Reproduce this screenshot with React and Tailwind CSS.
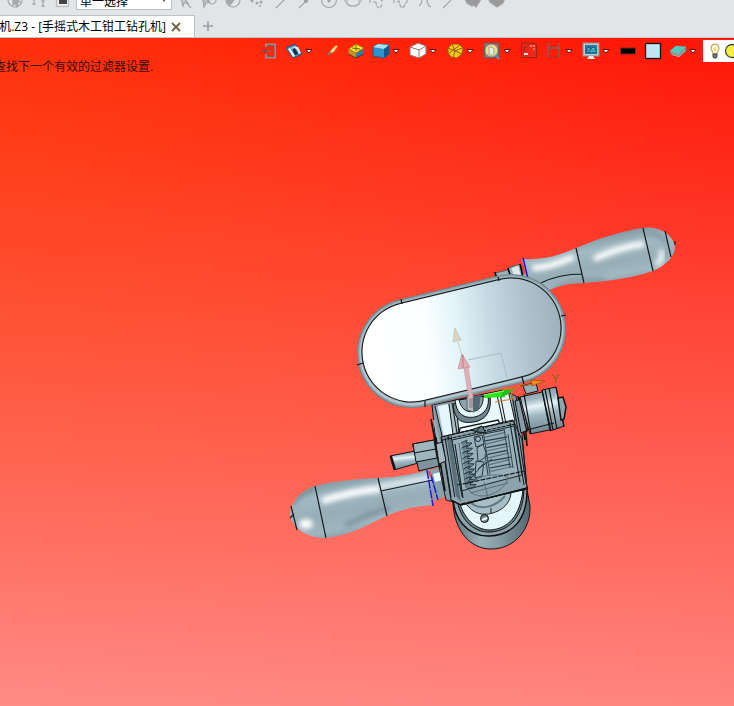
import React from "react";

const SKETCH_TOOLS = [
  ["Pick", <g key="a"><circle cx="12" cy="10" r="7" /><path d="M10 6v9l2-2 2 4 1-1-1-4h3z" fill="#aaa" /></g>],
  ["Align", <path key="a" d="M7 8v7M5 14h4M16 8v9M14 16h4M14 11h4" />],
  ["Filter", <g key="a"><rect x="5.500" y="3.500" width="12" height="13" fill="#eee" stroke="#bbb" /><rect x="8" y="7" width="8" height="7" fill="#444" stroke="none" /></g>],
];

const DRAW_TOOLS = [
  ["Select", <path key="a" d="M7 4l8 9-4 0-1 3zM13 12l5 6" fill="#ccc" />],
  ["Select chain", <g key="a"><path d="M5 4l8 8-4 1-2 4z" fill="#bbb" /><circle cx="15" cy="10" r="4" /></g>],
  ["Half circle", <g key="a"><circle cx="12" cy="10" r="7" /><path d="M9 5a6 6 0 0 0 0 10l7-9z" fill="#aaa" /></g>],
  ["Points", <g key="a" fill="#a5a5a5" stroke="none"><circle cx="7" cy="11" r="1.500" /><circle cx="12" cy="13" r="1.500" /><circle cx="16" cy="12" r="1.500" /><circle cx="15" cy="16" r="1" /></g>],
  ["Line", <path key="a" d="M7 18L19 6" />],
  ["Ray", <g key="a"><path d="M6 18L18 6" /><circle cx="13" cy="11" r="1.500" fill="#999" /></g>],
  ["Circle", <g key="a"><circle cx="12" cy="10" r="7.500" /><circle cx="12" cy="11" r="1" fill="#999" /></g>],
  ["Arc", <g key="a"><path d="M5 12a7.500 6.500 0 0 0 14 0" /><path d="M3 11h4M17 11h4" /></g>],
  ["Spline", <path key="a" d="M5 13V9M8 12h3M11 12c0 7 5 7 6 2M16 11l3-2" strokeDasharray="3 1" />],
  ["Curve", <path key="a" d="M5 13V9M8 12l2-1c1 8 5 8 6 3l3-4" strokeDasharray="4 1" />],
  ["Fillet", <path key="a" d="M6 16c4-2 2-7 4-9h3c2 3 0 8 5 10" />],
  ["Segment", <path key="a" d="M6 18L18 6" />],
  ["Solid", <path key="a" d="M4 9l8-5 8 5-3 5-2 3-2-2-2 1-5-3z" fill="#999" />],
  ["Surface", <path key="a" d="M4 10l8-6 8 4-2 5-6 4-7-5z" fill="#999" />],
];

function SketchButton({ label, children }) {
  return (
    <button type="button" aria-label={label} className="h-5 w-6 shrink-0">
      <svg viewBox="0 0 24 20" className="block h-5 w-6" fill="none" stroke="#a3a5a7" strokeWidth="1.200">
        {children}
      </svg>
    </button>
  );
}

function Caret() {
  return (
    <svg viewBox="0 0 8 8" className="h-2 w-2">
      <path d="M1 2.500h6L4 6z" fill="#fff" stroke="#4d1a10" />
    </svg>
  );
}

const VIEW_TOOLS = [
  ["Exit", false, <g key="a" fill="none"><path d="M6 5V2.500h9v13H6V12" stroke="#a8878a" strokeWidth="2" /><path d="M7 5V3.500h7v11H7V12" stroke="#5a5f66" strokeWidth=".8" /><path d="M12 9H4" stroke="#b9483d" strokeWidth="2" /><path d="M2 9l4-3v6z" fill="#6d4f4f" /></g>],
  ["Save view", true, <g key="a"><path d="M1 6l9-4 7 10-9 4z" fill="#4b8fc0" stroke="#2c5375" /><path d="M3 7l2-1 5 8-2 1z" fill="#e8f4fa" /><path d="M6 6l5-2 2 3-5 2z" fill="#c9e4f3" /><path d="M7 7l3-1 3 6-3 1z" fill="#12304f" /><path d="M11 5l2 0 3 6-2 1z" fill="#e8f4fa" /></g>],
  ["Brush", false, <g key="a"><path d="M6 13l3-5 5-5 2 1-4 6z" fill="#f6d489" stroke="#cb5e1f" strokeWidth=".7" /><path d="M5 14l2-4 4 1z" fill="#8e7362" /></g>],
  ["Section", false, <g key="a"><path d="M1.500 7l7.500 4v5l-7.500-4z" fill="#c4962a" /><path d="M9 11l8-4v5l-8 4z" fill="#2a7d9d" /><path d="M1.500 7L9 2l8 4-8 5z" fill="#fbe52e" stroke="#8d6c11" strokeWidth=".8" /><path d="M5 6l8 1M9 3v6" stroke="#6a6410" /><path d="M1.500 12L9 16l8-4" fill="none" stroke="#503d1b" /></g>],
  ["Shaded", true, <g key="a" strokeLinejoin="round"><path d="M1 5l5-3 11 1v9l-5 4-11-2z" fill="#2d93c9" stroke="#1c5f8a" /><path d="M1 5l5-3 11 1-5 4z" fill="#a9e2f5" /><path d="M12 7l5-4v9l-5 4z" fill="#0b5a8e" /></g>],
  ["Wireframe", true, <g key="a" fill="#fff" stroke="#97756f" strokeLinejoin="round"><path d="M1 5l8-4 8 3v8l-7 4-9-3z" /><path d="M1 5l9 3 7-4M10 8v8" fill="none" /></g>],
  ["Analyse", true, <g key="a" stroke="#875a09" strokeWidth=".9"><path d="M2 6l4-4 7 0 4 4-1 6-5 4-6-1-3-4z" fill="#fac51b" /><path d="M2 6l14 6M6 2l3 7-2 7M14 3L2 12M9 9l7-3" fill="none" /></g>],
  ["Zoom", true, <g key="a"><rect x="1.500" y="1.500" width="14" height="14" fill="#a88263" stroke="#5b6970" strokeWidth="1.500" /><circle cx="8.500" cy="8.500" r="5.500" fill="#f3dc73" stroke="#e4e6d9" /><path d="M6 5h3l2 2v6H6z" fill="#d9eef0" stroke="#aaa66c" /><path d="M13 13l3 4" stroke="#6686a8" strokeWidth="2.500" /></g>],
  ["Fit", false, <g key="a" fill="none"><rect x="1.500" y="1.500" width="15" height="14" fill="#ef2517" stroke="#96281c" /><path d="M10 4h4v4" stroke="#f9a58f" strokeWidth="1.300" strokeDasharray="2 1" /><path d="M4 12h4" stroke="#ffe6da" strokeWidth="2" /><path d="M4 9V5h3" stroke="#92281c" /></g>],
  ["Measure", true, <g key="a" fill="none" stroke="#7d5f66" strokeWidth="1.500"><path d="M3 1v15M14 1v15" /><path d="M3 6h11" /><path d="M3 15h11" stroke="#b02f23" strokeWidth="1" /></g>],
  ["Display", true, <g key="a"><rect x="1" y="1" width="16" height="13" fill="#c3c6c9" stroke="#8b8e91" /><rect x="3" y="3" width="12" height="9" fill="#1f7fa2" /><path d="M4 10l1-4 3-1 1 2 2-2 3 2 0 4-3-1-2 1-2-1z" fill="#5fc0d7" stroke="#0c4d6b" strokeWidth=".8" /><path d="M8 5v6M4 8h10" stroke="#0c4d6b" strokeWidth=".7" /><path d="M7 14h4l2 3H5z" fill="#e8eaec" /></g>],
  ["Black", false, <rect key="a" x="1.500" y="6" width="15" height="6" fill="#000" stroke="#7b2a20" />],
  ["Face colour", false, <rect key="a" x="1.500" y="1.500" width="15" height="15" fill="#bfe5f5" stroke="#111" strokeWidth="1.300" />],
  ["Eraser", true, <g key="a"><path d="M1 10l6-6 10 1v4l-7 6-7-2z" fill="#d0e0dc" /><path d="M1 9l6-5 10 1-6 6z" fill="#4dccbe" stroke="#5fa9a4" strokeWidth=".7" /><path d="M1 10l9 2 7-6v3l-7 5-8-2z" fill="#7fb7b2" stroke="#6c615c" strokeWidth=".6" /></g>],
];

function ViewToolbar() {
  return (
    <div role="toolbar" aria-label="View" className="flex h-[26px] items-center gap-[7px] overflow-hidden pl-[260px]">
      {VIEW_TOOLS.map(([label, split, art]) => (
        <button
          key={label}
          type="button"
          aria-label={label}
          className={split ? "flex w-[30px] shrink-0 items-center gap-0.5" : "flex w-[18px] shrink-0 items-center"}
        >
          <svg viewBox="0 0 18 18" className="h-[18px] w-[18px]">{art}</svg>
          {split && <Caret />}
        </button>
      ))}
      <button type="button" aria-label="Lights" className="-ml-[3px] flex h-[22px] min-w-[60px] flex-1 items-center gap-0.5 bg-white pl-[5px]">
        <svg viewBox="0 0 14 18" className="h-[18px] w-[14px] shrink-0">
          <path d="M5 12c0-3-2-3-2-6a4 4 0 0 1 8 0c0 3-2 3-2 6z" fill="#fffbd0" stroke="#b5914a" />
          <path d="M5 12h4v3l-1 1H6l-1-1z" fill="#777" stroke="#444" />
          <path d="M6 6l1 3 1-3" fill="none" stroke="#f0cf48" />
        </svg>
        <svg viewBox="0 0 16 16" className="h-4 w-4 shrink-0">
          <circle cx="8" cy="8" r="6.500" fill="#f6ed43" stroke="#3e4c43" strokeWidth="1.300" />
        </svg>
      </button>
    </div>
  );
}

const GEAR_TEETH = Array.from({ length: 9 }, (_, i) => i);
const RIBS = Array.from({ length: 12 }, (_, i) => i);
const WALL_LINES = [0, 3, 6, 9];

function DrillModel() {
  return (
    <svg viewBox="280 220 400 340" className="absolute left-[280px] top-[182px] h-[340px] w-[400px]" role="img" aria-label="手摇式木工钳工钻孔机">
      <defs>
        <linearGradient id="plate" gradientUnits="userSpaceOnUse" x1="360" y1="350" x2="564" y2="325">
          <stop offset="0" stopColor="#fff" />
          <stop offset=".32" stopColor="#fdffff" />
          <stop offset=".48" stopColor="#e2f4f9" />
          <stop offset=".65" stopColor="#c4d9e2" />
          <stop offset=".82" stopColor="#adc2cc" />
          <stop offset="1" stopColor="#9cb1bb" />
        </linearGradient>
        <linearGradient id="upper" gradientUnits="userSpaceOnUse" x1="608" y1="235" x2="617" y2="282">
          <stop offset="0" stopColor="#849ca6" />
          <stop offset=".25" stopColor="#a3bac3" />
          <stop offset=".6" stopColor="#97aeb7" />
          <stop offset=".85" stopColor="#a2b8c1" />
          <stop offset="1" stopColor="#8ca3ac" />
        </linearGradient>
        <linearGradient id="lower" gradientUnits="userSpaceOnUse" x1="345" y1="480" x2="356" y2="534">
          <stop offset="0" stopColor="#859da6" />
          <stop offset=".2" stopColor="#a2bac3" />
          <stop offset=".55" stopColor="#97aeb7" />
          <stop offset=".85" stopColor="#9fb6bf" />
          <stop offset="1" stopColor="#8aa1a9" />
        </linearGradient>
        <linearGradient id="knob" x1="0" y1="0" x2=".15" y2="1">
          <stop offset="0" stopColor="#7b929b" />
          <stop offset=".25" stopColor="#9db5bf" />
          <stop offset=".42" stopColor="#e6f4f9" />
          <stop offset=".62" stopColor="#a0b8c2" />
          <stop offset="1" stopColor="#728993" />
        </linearGradient>
        <linearGradient id="drum" x1="0" y1="0" x2="1" y2="0">
          <stop offset="0" stopColor="#5a6f78" />
          <stop offset=".35" stopColor="#9ab0b9" />
          <stop offset=".6" stopColor="#849ba4" />
          <stop offset="1" stopColor="#536770" />
        </linearGradient>
        <filter id="soft" x="-40%" y="-80%" width="180%" height="260%"><feGaussianBlur stdDeviation="2.800" /></filter>
        <clipPath id="upperClip"><path d="M522 259C545 260 560 255 576 248C600 238 622 231 643 228C660 225 673 236 675 246C675 257 665 266 653 271C630 279 605 281 584 283C565 283 556 287 545 292L524 280z" /></clipPath>
        <clipPath id="lowerClip"><path d="M430 469C415 474 400 477 378 478C355 479 335 481 315 486C300 491 290 503 290 516C294 531 310 538 326 538C348 536 368 525 386 516C402 509 417 506 433 505z" /></clipPath>
      </defs>

      {/* upper handle */}
      <g>
        <path d="M495 273l13-3v-2l12-4 5 14-28 4z" fill="#9db3bc" stroke="#45545a" strokeWidth=".8" />
        <path d="M508 268l3 10M520 264l3 13M495 272l2 8" stroke="#000" strokeWidth="1.600" />
        <path d="M512 268l6-2 3 10-7 2z" fill="#dceaf0" />
        <g clipPath="url(#upperClip)">
          <rect x="515" y="222" width="165" height="75" fill="url(#upper)" />
          <path d="M594 259C610 252 625 246 644 244" stroke="#fff" strokeWidth="6" fill="none" filter="url(#soft)" />
          <path d="M532 268C548 268 560 262 574 257" stroke="#fff" strokeWidth="6" fill="none" filter="url(#soft)" />
          <path d="M553 290C570 279 586 281 605 280" stroke="#718892" strokeWidth="3" fill="none" filter="url(#soft)" />
          <path d="M660 250C664 255 661 262 656 264" stroke="#f2fbff" strokeWidth="5" fill="none" filter="url(#soft)" />
          <path d="M648 235C658 232 663 238 666 243" stroke="#7f969f" strokeWidth="4" fill="none" filter="url(#soft)" />
        </g>
        <path d="M576 248l8 35M643 228l10 43M665 231l6 26M675 241v4M541 283c14-7 26-9 41-9" fill="none" stroke="#121a1d" strokeWidth="1.200" />
        <path d="M523 258l5 21" stroke="#1913d9" strokeWidth="1.500" />
        <path d="M522 263l3 11" stroke="#fa3b32" strokeWidth="2" />
      </g>

      {/* lower handle */}
      <g>
        <path d="M427 471l15-5 8 28-16 7z" fill="#8ba1aa" />
        <path d="M433 474l11-3 2 8-11 3z" fill="#e7f8fd" />
        <g clipPath="url(#lowerClip)">
          <rect x="285" y="462" width="155" height="82" fill="url(#lower)" />
          <path d="M322 501C343 494 359 491 380 489" stroke="#fff" strokeWidth="7" fill="none" filter="url(#soft)" />
          <path d="M380 487L430 478" stroke="#e6f2f6" strokeWidth="5" filter="url(#soft)" />
          <path d="M345 526C360 519 372 511 390 508" stroke="#768e98" strokeWidth="4" fill="none" filter="url(#soft)" />
          <ellipse cx="306" cy="524" rx="7" ry="5" fill="#fff" filter="url(#soft)" />
          <path d="M292 505C298 496 304 491 314 488" stroke="#738a93" strokeWidth="4" fill="none" filter="url(#soft)" />
        </g>
        <path d="M315 486l11 52M378 478l9 38M291 506l6 24M290 518l4-4M381 491l52-11" fill="none" stroke="#121a1d" strokeWidth="1.200" />
      </g>

      {/* lower drum */}
      <path d="M453 494C451 528 469 549 491 549C515 549 531 529 530 506L526 484z" fill="url(#drum)" stroke="#101719" />
      <path d="M453 492C452 519 468 537 490 536C513 535 528 519 527 487z" fill="#8da3ac" stroke="#111" strokeWidth="1.500" />
      <path d="M456 495C459 518 472 533 491 532C512 530 523 515 524 489z" fill="#68808a" stroke="#111" />
      <path d="M458 498C463 518 475 530 490 530C508 529 520 516 523 490z" fill="#e2f6fc" stroke="#111" />
      <path d="M465 502C473 515 485 517 498 511C506 507 511 500 511 492z" fill="#a8bec7" stroke="#222" />
      <path d="M470 502C478 510 494 509 505 496" fill="none" stroke="#657b84" strokeWidth="2" />
      <path d="M491 508v6" stroke="#222" />
      <circle cx="484.500" cy="518.500" r="4" fill="#708790" stroke="#111" />
      <path d="M482 520l5-2" stroke="#eaf9ff" strokeWidth="2" />

      {/* housing */}
      <path d="M432 405L503 390L516 396L522 434L527 489L461 504L446 500L438 462z" fill="#859ba4" stroke="#101719" />
      <path d="M435 407l20-4 7 30-20 5z" fill="#a9c0ca" />
      <path d="M438 406l10-2 6 30-10 3z" fill="#e4f5fb" />
      <path d="M449 404l4 30M452 403l5 30M455 403l5 30M435 406l8 34" fill="none" stroke="#111" />
      <path d="M456 402l42-9 5 31-44 9z" fill="#e9faff" stroke="#111" />
      <path d="M497 397l13-3 5 27-12 3z" fill="#e5f5fa" />
      <path d="M497 395l7 31M500 394l6 30M509 394l6 27M512 395l6 35" fill="none" stroke="#111" />
      <path d="M453 404C455 424 465 423 474 422C486 420 492 411 490 396z" fill="#6d848e" stroke="#111" />
      <path d="M455 400C457 418 468 418 475 417C485 414 490 407 488 396z" fill="#e4f7fd" stroke="#111" />
      <path d="M459 400C462 411 468 413 475 411C480 410 484 403 483 396z" fill="#8ea5b0" stroke="#111" />
      <path d="M467 396v14l7 2v-16z" fill="#b3c0ca" stroke="#59636a" />
      <path d="M473 396v15l6-2 2-14z" fill="#546874" />
      <path d="M459 433l1-5 38-8 2 4zM456 437l44-10" fill="none" stroke="#111" strokeWidth="1.300" />
      <path d="M431 419l9 49M436 437l9 54M525 421l2 25M518 396l7 44" fill="none" stroke="#111" strokeWidth="1.600" />
      <path d="M434 420l8 37" stroke="#9fb5be" strokeWidth="2" />

      {/* geared section */}
      <path d="M441 437L513 420L522 440L527 488L461 505L451 500z" fill="#8ca3ad" stroke="#111" />
      {WALL_LINES.map((x) => (
        <path key={x} d={`M${442 + x} ${438 - x / 4}l${9 + x / 4} ${59 + x / 4}`} fill="none" stroke="#10191c" strokeWidth={x === 6 ? 2 : 1} />
      ))}
      <path d="M447 440l9 56 5 6-10-64z" fill="#5a707a" />
      <path d="M452 440L514 426L522 475L461 491z" fill="#98b0ba" stroke="#1b272c" />
      <path d="M455 444l8 54M510 423l10 59M514 421l10 64M518 430l8 54" fill="none" stroke="#152024" strokeWidth="1.100" />
      <path d="M459 443l7 45" stroke="#4e646d" />
      <path d="M441 437l72-16M443 440l72-16" fill="none" stroke="#111" strokeDasharray="4 1" />
      {RIBS.map((i) => (
        <path key={i} d={`M${484 + i * 0.6} ${434 + i * 3.4}l${20 + (i % 3)} -${4 + (i % 2)}`} stroke={i % 2 ? "#5b717b" : "#2a3c44"} strokeWidth="1.200" />
      ))}
      <path d="M483 431l7 43M504 428l6 40M508 434l5 34" fill="none" stroke="#34464e" />
      {GEAR_TEETH.map((i) => (
        <path key={i} d={`M${461 + i * 0.5} ${443 + i * 5.2}l6-3-1 3 6 0-3 3-6 1`} fill="#6f8792" stroke="#24353c" />
      ))}
      <path d="M474 437l8-2 2 9-8 3zM477 448l6-4 4 12-9 6zM476 461l8 1-2 14-7 2zM471 472l6 8M485 454l3 21M478 469l14-10M468 482l15-18" fill="none" stroke="#2b3c44" />
      <circle cx="478" cy="439" r="2.500" fill="#a4b9c2" stroke="#17262c" />
      <path d="M471 430l11-4 4 7-8-1zM475 433l5-6" fill="#607985" stroke="#111" />
      <path d="M469 490c8 12 34 5 39-12M467 485c7-8 31-14 42-7M470 493l38-10M484 482l4 15" fill="none" stroke="#5a717b" />
      <path d="M457 485L525 471M461 504L527 489" fill="none" stroke="#152024" strokeDasharray="5 1" strokeWidth="1.200" />
      <path d="M451 500L461 505L527 488" fill="none" stroke="#111" strokeWidth="1.300" />

      {/* side pin and nut */}
      <path d="M390 456l25-5 3 12-24 7z" fill="url(#knob)" stroke="#111" />
      <path d="M391 456l4 13" stroke="#111" strokeWidth="2" />
      <path d="M412.500 444L434 440l5 26-20 5z" fill="#7e949d" stroke="#111" />
      <path d="M413 444l21-4 3 18-21 4z" fill="#9eb5be" stroke="#111" />
      <path d="M414 453l22-4" stroke="#111" />
      <path d="M436 444l6-2 4 19-7 3z" fill="#a3b9c2" stroke="#111" />
      <path d="M427 470l6 36M431 475l7 25" stroke="#1c18dc" strokeWidth="1.500" strokeDasharray="9 1" />
      <path d="M429 471l2 6" fill="none" stroke="#f33e37" strokeWidth="2" />

      {/* chuck on the right */}
      <path d="M515 401l7-2 6 31-7 3z" fill="#879ea8" stroke="#111" />
      <path d="M520 397l31-7 8 38-29 6z" fill="url(#knob)" stroke="#111" />
      <path d="M542 390l14-3 8 39-14 5z" fill="url(#knob)" stroke="#111" />
      <path d="M519 397l8 35M524 394l7 40M542 390l9 41M545 389l8 41M549 388l8 41M556 387l8 40" fill="none" stroke="#111" strokeWidth="1.200" />
      <path d="M558 398l5-1 3 10-2 12-3 1z" fill="#8fa5ae" stroke="#111" strokeWidth="1.500" />
      <path d="M527 430l27-7" stroke="#111" />
      <path d="M523 386l13-3 2 8-12 3z" fill="#98aeb6" stroke="#111" />

      {/* oval head plate */}
      <path d="M412 353L511 329" stroke="#6d848d" strokeWidth="110" strokeLinecap="round" />
      <path d="M412 353L511 329" stroke="#8fa6af" strokeWidth="108" strokeLinecap="round" />
      <path d="M412 353L511 329" stroke="#b1c6ce" strokeWidth="105" strokeLinecap="round" />
      <path d="M412 352L511 328" stroke="#8199a2" strokeWidth="102" strokeLinecap="round" />
      <path d="M412 352L511 328" stroke="#111" strokeWidth="101" strokeLinecap="round" />
      <path d="M412 352L511 328" stroke="url(#plate)" strokeWidth="99" strokeLinecap="round" />
      <path d="M401 299l1 5M357 365l6-2M425 401v6M522 377l2 7M561 316l5-1M498 277l1 4" stroke="#111" strokeWidth="1.200" />

      {/* axis triad */}
      <path d="M468 360l33-7 6 25" fill="none" stroke="#a9bdc5" />
      <path d="M455 328l-2 14 8-2zM458 342l5 17" fill="#d8d5c2" stroke="#c1bca2" strokeWidth=".7" />
      <path d="M464 368l5 31 4-1-5-31z" fill="#dcb2b6" stroke="#cb9aa0" strokeWidth=".7" />
      <path d="M462 354l-4 15 6-1 6-1z" fill="#dfb1b5" stroke="#c58a90" strokeWidth=".7" />
      <path d="M463 355v13" stroke="#c07a82" />
      <path d="M469 399l4-1v10h-4z" fill="#a3858e" opacity=".7" />
      <path d="M484 395l21-4v6l-21 1z" fill="#28e318" />
      <path d="M502 390l-1 8 15-9z" fill="#21bf13" />
      <path d="M484 395l20-4" stroke="#91ff75" />
      <path d="M516 387l16-3M495 402l18-3-3-11M492 391l17-3" fill="none" stroke="#ce7e2a" />
      <path d="M531 380l1 6 13-5z" fill="#f5881b" stroke="#8f4b10" strokeWidth=".7" />
      <path d="M520 386l12-3" stroke="#6b4a1c" />
      <text x="551" y="383" fontSize="13" fontFamily="Liberation Sans, sans-serif" fill="#9c5f10">Y</text>
    </svg>
  );
}

export default function App() {
  return (
    <div className="flex min-h-screen flex-col overflow-hidden bg-[#e2e5e8] font-['Open_Sans','Noto_Sans_CJK_SC',sans-serif] text-xs text-black">
      <header className="shrink-0 border-b border-[#c3c6c8]">
        <div className="flex h-[11px] items-end overflow-hidden pb-px pl-[3px]">
          {SKETCH_TOOLS.map(([label, art]) => <SketchButton key={label} label={label}>{art}</SketchButton>)}
          <div className="relative ml-px shrink-0">
            <select aria-label="选择方式" className="block h-5 w-24 appearance-none border border-[#bcbec0] bg-white pl-[3px] pt-1 text-xs leading-3">
              <option>单一选择</option>
            </select>
            <span className="pointer-events-none absolute right-1.5 top-[9px] border-x-2 border-t-3 border-x-transparent border-t-[#555]" />
          </div>
          <span className="w-px shrink-0" />
          {DRAW_TOOLS.map(([label, art]) => <SketchButton key={label} label={label}>{art}</SketchButton>)}
        </div>
        <div className="flex h-[26px] items-end">
          <div className="flex h-[22px] w-[195px] items-center justify-end gap-1 overflow-hidden border-r border-t border-[#bfc2c4] bg-white pr-3">
            <span className="whitespace-nowrap">机.Z3 - [手摇式木工钳工钻孔机]</span>
            <button type="button" aria-label="关闭" className="h-3 w-3 shrink-0">
              <svg viewBox="0 0 12 12" className="h-3 w-3"><path d="M2 2l8 8M10 2l-8 8" stroke="#756645" strokeWidth="2" /></svg>
            </button>
          </div>
          <button type="button" aria-label="新建" className="ml-[7px] flex h-[22px] w-3 items-center">
            <svg viewBox="0 0 12 12" className="h-3 w-3"><path d="M6 1v10M1 6h10" stroke="#9b9da0" strokeWidth="1.500" /></svg>
          </button>
        </div>
      </header>
      <main className="relative flex-1 bg-[radial-gradient(ellipse_at_0%_10%,#ff780038,#ff780000_65%),linear-gradient(183deg,#ff1605,#ff5244_50%,#ff8b85)]">
        <ViewToolbar />
        <p className="-ml-1.5 whitespace-nowrap leading-[6px] text-[#330c06]">查找下一个有效的过滤器设置.</p>
        <DrillModel />
      </main>
    </div>
  );
}
